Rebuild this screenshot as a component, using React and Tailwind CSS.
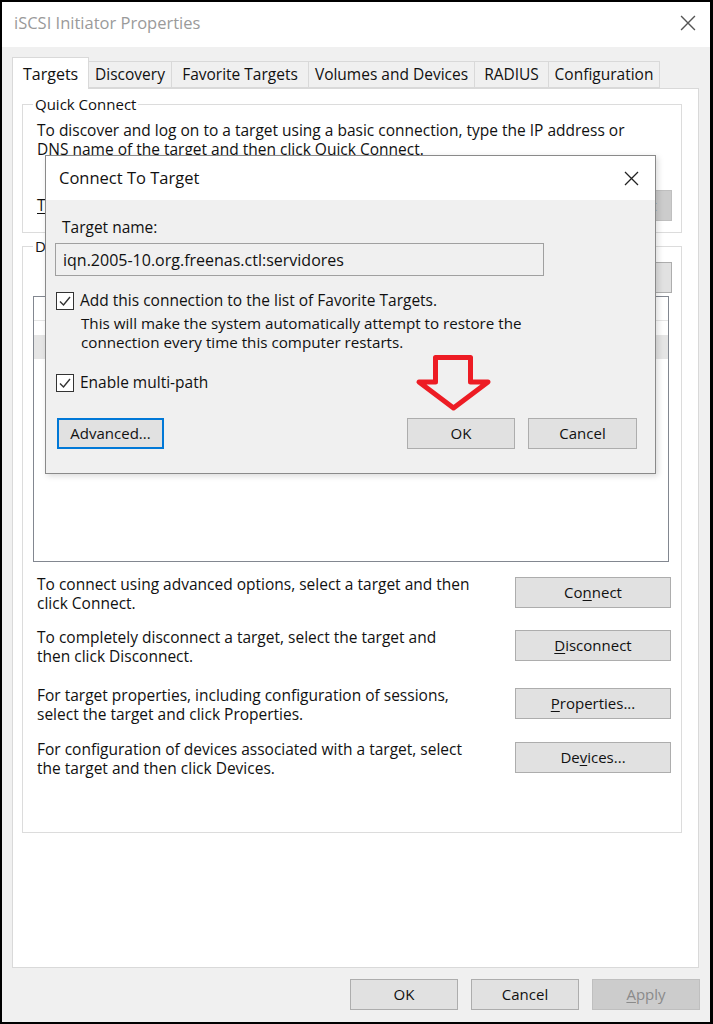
import React from 'react'

const font = "font-['Segoe_UI','Open_Sans',sans-serif]"

function CloseX({ size = 15, color = '#222' }) {
  return (
    <svg width={size} height={size} viewBox="0 0 15 15">
      <path d="M1 1 L14 14 M14 1 L1 14" stroke={color} strokeWidth="1.3" fill="none" />
    </svg>
  )
}

function Button({ children, className = '', disabled = false }) {
  return (
    <div
      className={
        'flex items-center justify-center h-[31px] border text-[15px] ' +
        (disabled ? 'bg-[#cccccc] border-[#bfbfbf] text-[#8a8a8a] ' : 'bg-[#e1e1e1] border-[#adadad] text-[#111] ') +
        className
      }
    >
      {children}
    </div>
  )
}

function Check() {
  return (
    <div className="w-[18px] h-[18px] border border-[#333] bg-white flex items-center justify-center shrink-0">
      <svg width="14" height="14" viewBox="0 0 14 14">
        <path d="M2 7.5 L5.5 11 L12 3" stroke="#333" strokeWidth="1.4" fill="none" />
      </svg>
    </div>
  )
}

const tabs = [
  { label: 'Discovery', w: 'w-[83px]' },
  { label: 'Favorite Targets', w: 'w-[137px]' },
  { label: 'Volumes and Devices', w: 'w-[166px]' },
  { label: 'RADIUS', w: 'w-[74px]' },
  { label: 'Configuration', w: 'w-[111px]' },
]

const actions = [
  {
    text: ['To connect using advanced options, select a target and then', 'click Connect.'],
    btn: <>Co<u className="underline-offset-2">n</u>nect</>,
    mt: 'mt-[10px]',
  },
  {
    text: ['To completely disconnect a target, select the target and', 'then click Disconnect.'],
    btn: <><u className="underline-offset-2">D</u>isconnect</>,
    mt: 'mt-[12px]',
  },
  {
    text: ['For target properties, including configuration of sessions,', 'select the target and click Properties.'],
    btn: <><u className="underline-offset-2">P</u>roperties...</>,
    mt: 'mt-[17px]',
  },
  {
    text: ['For configuration of devices associated with a target, select', 'the target and then click Devices.'],
    btn: <>De<u className="underline-offset-2">v</u>ices...</>,
    mt: 'mt-[13px]',
  },
]

export default function App() {
  return (
    <div className={'relative w-[713px] h-[1024px] bg-black pt-[2px] pl-[2px] pr-[3px] pb-[2px] text-[#111] ' + font}>
      <div className="h-full bg-[#f0f0f0] flex flex-col">
        {/* title bar */}
        <div className="h-[45px] bg-white flex items-center justify-between pl-[12px] pr-[14px] shrink-0">
          <span className="text-[16.5px] text-[#9a9a9a] -mt-[2px]">iSCSI Initiator Properties</span>
          <div className="-mt-[4px]">
            <CloseX size={16} color="#555" />
          </div>
        </div>

        {/* tabs */}
        <div className="flex items-end pl-[10px] mt-[9px] h-[32px] shrink-0">
          <div className="w-[77px] h-[32px] bg-white border border-b-0 border-[#d9d9d9] flex items-center pl-[10px] text-[16px] relative z-10 -mb-px">
            Targets
          </div>
          {tabs.map((t) => (
            <div
              key={t.label}
              className={t.w + ' h-[27px] bg-[#f0f0f0] border border-l-0 border-[#d9d9d9] flex items-center justify-center text-[15.5px]'}
            >
              {t.label}
            </div>
          ))}
        </div>

        {/* tab panel */}
        <div className="mx-[10px] mr-[11px] h-[880px] bg-white border border-[#d9d9d9] pl-[9px] pr-[16px] pt-[5px] shrink-0">
          <fieldset className="border border-[#dcdcdc] pl-[14px] pr-[9px] pb-[11px]">
            <legend className="-ml-[4px] px-[2px] text-[15px] leading-[20px]">Quick Connect</legend>
            <div className="mt-[7px] text-[15.5px] leading-[19px]">
              <div>To discover and log on to a target using a basic connection, type the IP address or</div>
              <div>DNS name of the target and then click Quick Connect.</div>
            </div>
            <div className="mt-[31px] flex items-center">
              <span className="text-[15.5px] w-[60px]">
                <u className="underline-offset-2">T</u>arget:
              </span>
              <div className="flex-1 h-[26px] bg-white border border-[#7a7a7a] mr-[12px]" />
              <Button disabled className="w-[132px] h-[30px]">
                <u className="underline-offset-2">Q</u>uick Connect
              </Button>
            </div>
          </fieldset>

          <fieldset className="mt-[3px] h-[597px] border border-[#dcdcdc] pl-[10px] pr-[12px]">
            <legend className="ml-[0px] px-[2px] text-[15px] leading-[20px]">Discovered targets</legend>
            <div className="flex justify-end mt-[6px]">
              <Button className="w-[110px] h-[31px] -mr-[3px]">
                <u className="underline-offset-2">R</u>efresh
              </Button>
            </div>
            {/* target list; its rows sit behind the dialog */}
            <div className="mt-[3px] h-[266px] border border-[#828790] bg-white">
              <div className="flex h-[24px] border-b border-[#e5e5e5]">
                <div className="w-[420px] border-r border-[#e5e5e5]" />
              </div>
              <div className="h-[24px] bg-[#e5e5e5] mt-[14px]" />
            </div>
            {actions.map((a, i) => (
              <div key={i} className={'flex items-center justify-between pl-[4px] -mr-[2px] ' + a.mt}>
                <div className="text-[15.5px] leading-[19px] pt-[3px]">
                  <div>{a.text[0]}</div>
                  <div>{a.text[1]}</div>
                </div>
                <Button className="w-[156px] h-[31px]">{a.btn}</Button>
              </div>
            ))}
          </fieldset>
        </div>

        {/* bottom buttons */}
        <div className="flex justify-end gap-[13px] mt-[11px] pr-[10px]">
          <Button className="w-[108px]">OK</Button>
          <Button className="w-[108px]">Cancel</Button>
          <Button disabled className="w-[108px]">
            <u className="underline-offset-2">A</u>pply
          </Button>
        </div>
      </div>

      {/* Connect To Target dialog */}
      <div className="absolute left-[45px] top-[155px] w-[611px] h-[319px] border border-[#8a8a8a] bg-[#f0f0f0] flex flex-col shadow-[2px_2px_6px_rgba(0,0,0,0.15)]">
        <div className="h-[44px] bg-white flex items-center justify-between pl-[13px] pr-[16px]">
          <span className="text-[16.5px] text-[#111]">Connect To Target</span>
          <CloseX size={15} color="#222" />
        </div>
        <div className="px-[9px] pt-[18px]">
          <div className="pl-[7px] text-[15.5px] leading-[19px]">Target name:</div>
          <div className="mt-[6px] w-[489px] h-[33px] border border-[#a0a0a0] bg-[#f0f0f0] flex items-center pl-[7px] text-[16px]">
            iqn.2005-10.org.freenas.ctl:servidores
          </div>
          <div className="mt-[15px] flex items-center gap-[6px] pl-[1px]">
            <Check />
            <span className="text-[15.5px] leading-[19px]">Add this connection to the list of Favorite Targets.</span>
          </div>
          <div className="pl-[26px] mt-[4px] text-[15.2px] leading-[19px]">
            <div>This will make the system automatically attempt to restore the</div>
            <div>connection every time this computer restarts.</div>
          </div>
          <div className="mt-[21px] flex items-center gap-[6px] pl-[1px]">
            <Check />
            <span className="text-[15.5px] leading-[19px]">Enable multi-path</span>
          </div>
          <div className="mt-[26px] flex items-center pl-[2px]">
            <div className="w-[107px] h-[31px] border-2 border-[#0078d7] bg-[#e1e1e1] flex items-center justify-center text-[15px]">
              Advanced...
            </div>
            <div className="flex-1" />
            <Button className="w-[108px]">OK</Button>
            <Button className="w-[109px] ml-[13px] mr-[9px]">Cancel</Button>
          </div>
        </div>
      </div>

      {/* red arrow annotation */}
      <svg className="absolute left-[410px] top-[350px]" width="85" height="65" viewBox="0 0 85 65">
        <polygon
          points="25.5,7.5 60.5,7.5 60.5,32 78,32 43.5,58 9,32 25.5,32"
          fill="none"
          stroke="#ed1c24"
          strokeWidth="5"
          strokeLinejoin="round"
        />
      </svg>
    </div>
  )
}
